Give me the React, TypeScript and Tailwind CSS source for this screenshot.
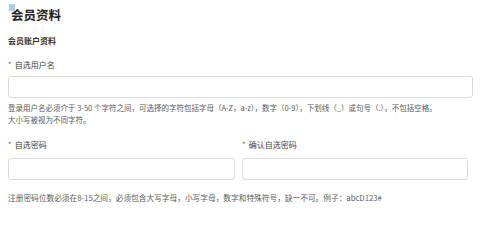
const cjk = "font-['Microsoft_YaHei','Noto_Sans_CJK_SC',sans-serif]";

function Label({ text }: { text: string }) {
  return (
    <div className="flex items-center text-[8px] leading-[10px] text-[#444]">
      <span className="mr-[3px] text-[#e4393c]">*</span>
      <span>{text}</span>
    </div>
  );
}

function Field({ className }: { className: string }) {
  return (
    <input
      type="text"
      className={`h-[22px] rounded-[3px] border border-[#dcdcdc] bg-white outline-none ${className}`}
    />
  );
}

export default function App() {
  return (
    <div className={`relative h-[210px] w-[480px] overflow-hidden bg-white pl-[8px] ${cjk}`}>
      {/* selection artifact */}
      <div className="absolute left-[9px] top-[4px] h-[7px] w-[6px] bg-[#a9cdf1]" />

      <h1 className="relative mt-[7px] pl-[3px] text-[12.5px] font-bold leading-[16px] text-[#222]">会员资料</h1>

      <div className="mt-[13px] text-[8px] font-bold leading-[10px] text-[#333]">会员账户资料</div>

      <div className="mt-[14px]">
        <Label text="自选用户名" />
      </div>
      <Field className="mt-[6px] block w-[465px]" />
      <p className="mt-[4px] text-[7.5px] leading-[12px] text-[#5a5a5a]">
        <span className="block whitespace-nowrap">
          登录用户名必须介于 3-50 个字符之间，可选择的字符包括字母（A-Z，a-z），数字（0-9），下划线（_）或句号（.），不包括空格。
        </span>
        <span className="block">大小写被视为不同字符。</span>
      </p>

      <div className="mt-[14px] flex gap-[7px]">
        <div className="flex w-[227px] flex-col">
          <Label text="自选密码" />
          <Field className="mt-[8px] h-[21px] w-full" />
        </div>
        <div className="flex w-[226px] flex-col">
          <Label text="确认自选密码" />
          <Field className="mt-[8px] h-[21px] w-full" />
        </div>
      </div>

      <p className="mt-[12px] whitespace-nowrap text-[7.7px] leading-[12px] text-[#5a5a5a]">
        注册密码位数必须在8-15之间，必须包含大写字母，小写字母，数字和特殊符号，缺一不可。例子：abcD123#
      </p>
    </div>
  );
}
